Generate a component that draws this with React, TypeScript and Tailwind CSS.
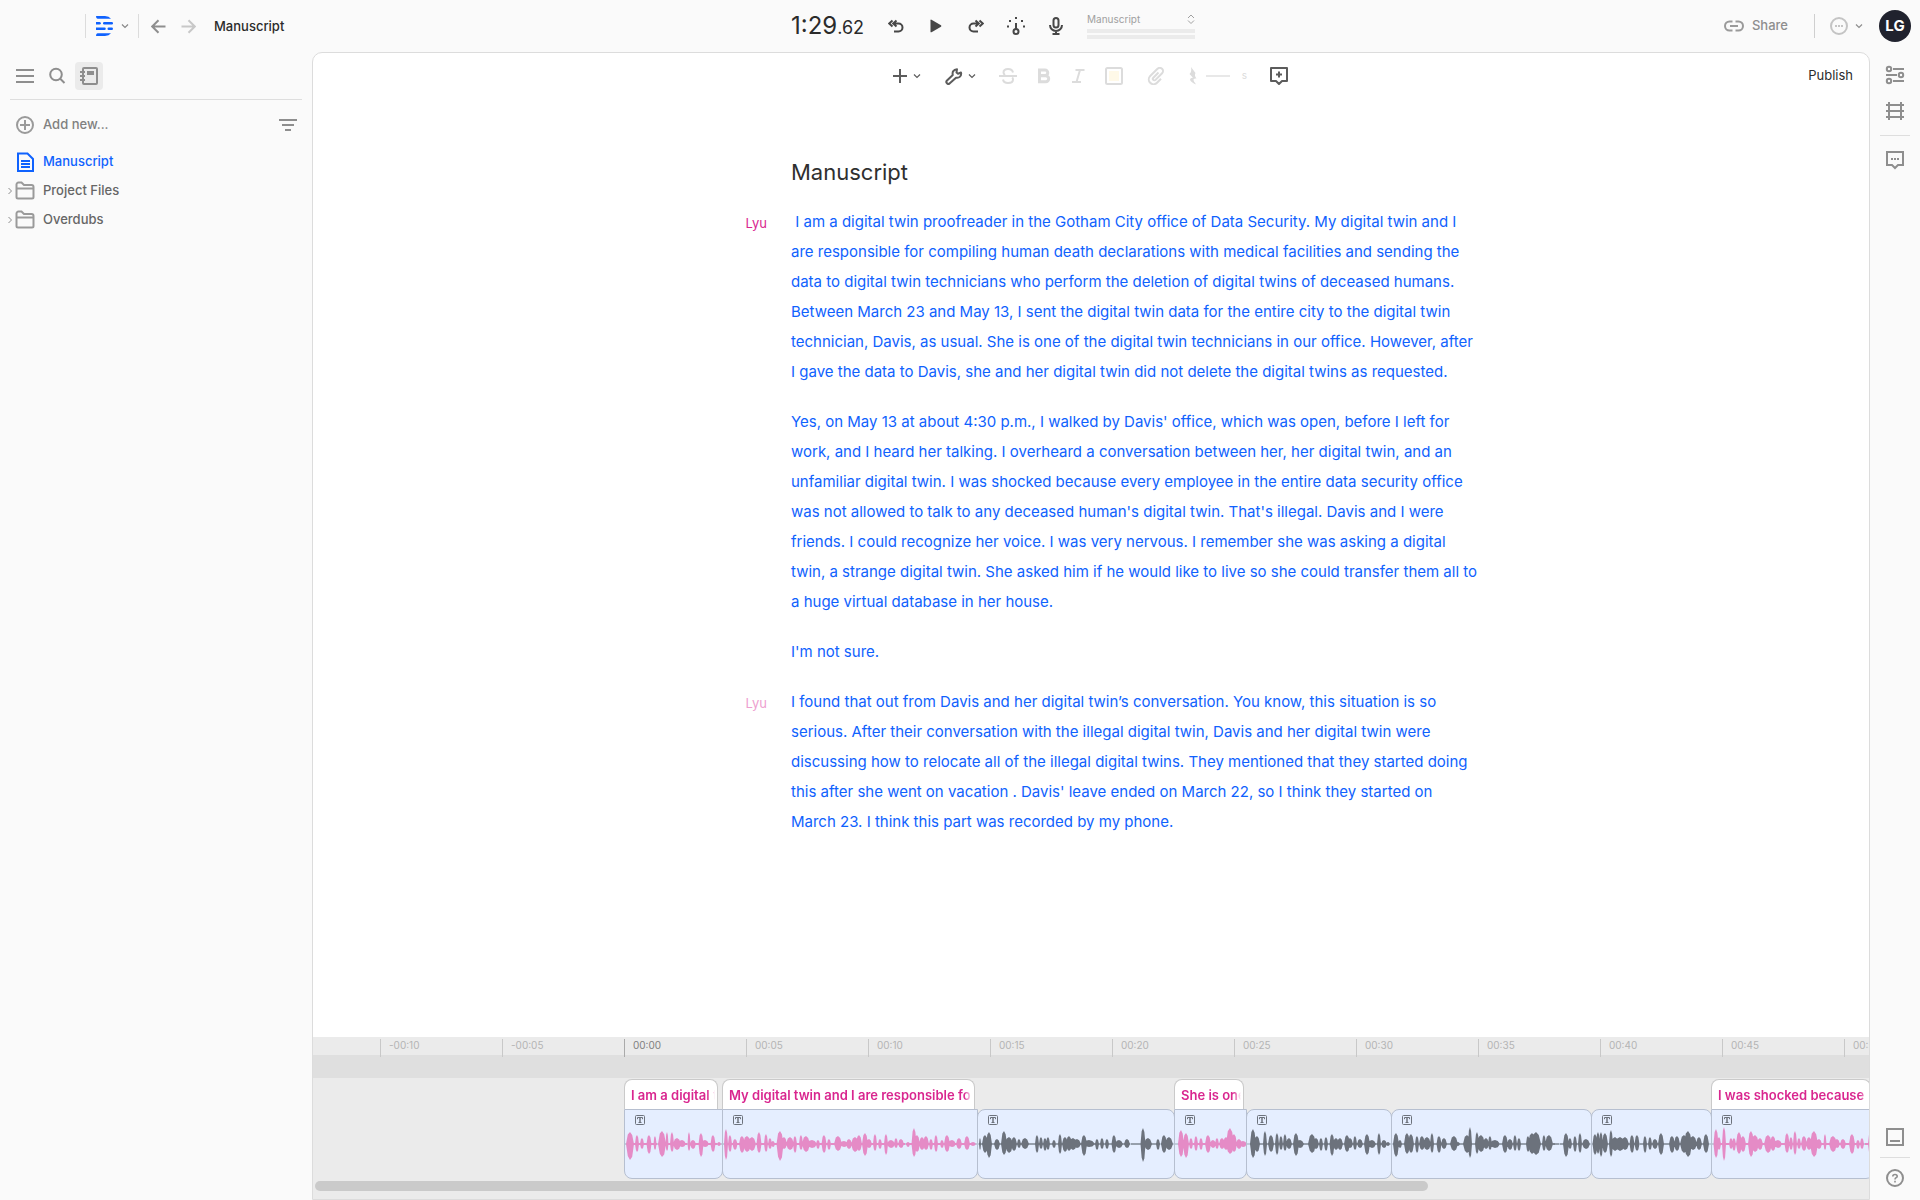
import type { ReactNode } from "react";

// [x, half width, height above the line, height below the line]
type Peak = [number, number, number, number];

type Clip = {
  width: number;
  label?: string;
  labelWidth?: number;
  peaks: Peak[];
};

const CLIPS: Clip[] = [
  {
    width: 98,
    label: "I am a digital t",
    labelWidth: 94,
    peaks: [
      [5, 4, 12, 16], [12, 2, 9, 8], [17, 2, 6, 5], [24, 2.5, 9, 10], [30, 1.5, 8, 6], [37, 4, 13, 13],
      [42, 1.5, 12, 7], [47, 2, 12, 8], [52, 4, 6, 6], [57, 4, 4, 3], [64, 1.5, 12, 7], [68, 3, 4, 5],
      [76, 2.5, 11, 13], [80, 4, 4, 3], [88, 2.5, 9, 8], [94, 2, 2, 2],
    ],
  },
  {
    width: 255,
    label: "My digital twin and I are responsible fo",
    labelWidth: 253,
    peaks: [
      [3, 2, 15, 16], [7, 2, 9, 8], [12, 2.5, 5, 6], [19, 3, 8, 9], [24, 4, 8, 8], [29, 4, 7, 7],
      [36, 2.5, 12, 9], [43, 2, 10, 8], [47, 2, 6, 5], [50, 2, 3, 3], [57, 3.5, 13, 17], [61, 3, 7, 5],
      [67, 4, 7, 6], [72, 2, 8, 9], [78, 2, 9, 6], [83, 4, 8, 8], [89, 5, 4, 4], [95, 2, 4, 5],
      [101, 2.5, 9, 9], [106, 2, 5, 6], [115, 4, 8, 7], [121, 4, 3, 3], [126, 3, 5, 5], [132, 4, 7, 8],
      [136, 3, 9, 7], [142, 3, 11, 12], [146, 3, 5, 4], [152, 2, 10, 7], [157, 2, 5, 5], [163, 2, 10, 11],
      [168, 4, 4, 4], [173, 2, 6, 4], [178, 3, 5, 4], [185, 2, 2, 3], [191, 2.5, 16, 13], [194, 3, 9, 8],
      [199, 3, 7, 6], [203, 3, 8, 6], [208, 2, 5, 6], [213, 2, 9, 8], [219, 2, 4, 4], [224, 3, 9, 8],
      [229, 4, 4, 3], [236, 3, 6, 5], [244, 3, 8, 6], [250, 3, 2, 2],
    ],
  },
  {
    width: 197,
    peaks: [
      [2, 1, 6, 6], [7, 3, 9, 9], [11, 3, 12, 14], [19, 3, 5, 6], [26, 3, 13, 11], [31, 4, 7, 9],
      [36, 3, 7, 7], [41, 2, 5, 4], [47, 4, 6, 5], [59, 2, 9, 9], [63, 2, 7, 5], [67, 2, 6, 7],
      [70, 2, 7, 6], [76, 2, 4, 4], [82, 2, 10, 10], [87, 3, 7, 8], [91, 3, 8, 7], [95, 4, 6, 6],
      [99, 4, 5, 4], [106, 3, 9, 12], [111, 6, 4, 3], [119, 2, 5, 6], [124, 2, 6, 5], [129, 2, 5, 5],
      [136, 2.5, 9, 9], [141, 4, 4, 4], [149, 3, 5, 4], [165, 2.5, 16, 18], [170, 4, 6, 6], [180, 2, 5, 6],
      [186, 3, 9, 9], [191, 4, 7, 6],
    ],
  },
  {
    width: 72,
    label: "She is one",
    labelWidth: 70,
    peaks: [
      [6, 3, 14, 13], [11, 3, 11, 14], [16, 2, 6, 5], [21, 2, 8, 7], [26, 2, 6, 6], [33, 3, 9, 9],
      [38, 3, 4, 4], [42, 2, 6, 5], [47, 3, 6, 5], [51, 3, 7, 6], [55, 4, 16, 10], [59, 3, 10, 8],
      [64, 3, 5, 5], [68, 4, 3, 3],
    ],
  },
  {
    width: 145,
    peaks: [
      [6, 3, 15, 14], [10, 3, 8, 8], [18, 2, 13, 12], [24, 3, 9, 8], [30, 2, 11, 11], [34, 2, 8, 6],
      [38, 2, 10, 7], [42, 3, 6, 5], [49, 3, 11, 12], [53, 4, 4, 4], [65, 4, 10, 9], [69, 3, 6, 5],
      [74, 2, 6, 7], [79, 2, 7, 7], [85, 2.5, 10, 12], [89, 3, 6, 6], [93, 3, 6, 6], [100, 3, 9, 8],
      [103, 3, 6, 4], [108, 2, 8, 6], [113, 3, 5, 4], [120, 3, 10, 11], [125, 4, 4, 4], [132, 2, 11, 11],
      [137, 3, 4, 4], [141, 2, 2, 2],
    ],
  },
  {
    width: 200,
    peaks: [
      [4, 3, 11, 13], [8, 2, 4, 4], [15, 3, 11, 10], [19, 3, 10, 9], [25, 2, 8, 9], [30, 3, 8, 6],
      [35, 4, 7, 6], [40, 2, 11, 9], [47, 2.5, 8, 9], [52, 3, 6, 5], [62, 4, 8, 7], [66, 2, 2, 2],
      [75, 4, 9, 9], [78, 2, 17, 14], [85, 2, 12, 10], [89, 4, 9, 8], [94, 3, 6, 5], [98, 2, 8, 6],
      [103, 5, 4, 4], [113, 3, 9, 9], [118, 3, 5, 6], [123, 2, 9, 7], [127, 2, 6, 7], [136, 2, 8, 8],
      [140, 4, 11, 10], [144, 5, 12, 11], [152, 2, 9, 7], [157, 4, 9, 7], [162, 1, 1, 1], [174, 3, 11, 13],
      [178, 2, 6, 5], [183, 2, 8, 8], [188, 2, 11, 9], [194, 4, 5, 5],
    ],
  },
  {
    width: 120,
    peaks: [
      [3, 2.5, 10, 11], [6, 2, 12, 10], [9, 2, 12, 13], [13, 3, 11, 9], [19, 2, 14, 13], [23, 4, 7, 7],
      [28, 5, 7, 7], [33, 4, 7, 6], [40, 2.5, 9, 9], [45, 2.5, 9, 7], [53, 2, 8, 9], [58, 2, 7, 6],
      [63, 3, 5, 5], [69, 3, 11, 11], [80, 3, 8, 9], [85, 3, 8, 7], [92, 4, 9, 9], [96, 4, 13, 13],
      [101, 4, 8, 6], [107, 3, 7, 6], [114, 3, 10, 9],
    ],
  },
  {
    width: 162,
    label: "I was shocked because e",
    labelWidth: 160,
    peaks: [
      [4, 2.5, 15, 14], [7, 2, 7, 6], [12, 2, 17, 17], [19, 2, 6, 5], [22, 2, 6, 7], [27, 3, 12, 10],
      [31, 3, 8, 8], [39, 3, 13, 13], [43, 4, 9, 8], [48, 3, 6, 6], [56, 4, 9, 9], [61, 3, 8, 7],
      [66, 4, 4, 4], [75, 2.5, 11, 9], [79, 2, 7, 6], [83, 2, 13, 11], [87, 2, 6, 5], [92, 3, 8, 7],
      [97, 3, 7, 6], [102, 4, 13, 13], [107, 3, 5, 5], [113, 1.5, 10, 6], [121, 4, 8, 8], [125, 3, 5, 4],
      [131, 3, 5, 5], [140, 3, 10, 10], [146, 2, 4, 5], [150, 2, 6, 5], [158, 2, 11, 10],
    ],
  },
];

const TICKS = [
  "-00:10", "-00:05", "00:00", "00:05", "00:10", "00:15", "00:20",
  "00:25", "00:30", "00:35", "00:40", "00:45", "00:50",
];

const PARAGRAPHS: { speaker?: string; faded?: boolean; lines: string[] }[] = [
  {
    speaker: "Lyu",
    lines: [
      " I am a digital twin proofreader in the Gotham City office of Data Security. My digital twin and I",
      "are responsible for compiling human death declarations with medical facilities and sending the",
      "data to digital twin technicians who perform the deletion of digital twins of deceased humans.",
      "Between March 23 and May 13, I sent the digital twin data for the entire city to the digital twin",
      "technician, Davis, as usual. She is one of the digital twin technicians in our office. However, after",
      "I gave the data to Davis, she and her digital twin did not delete the digital twins as requested.",
    ],
  },
  {
    lines: [
      "Yes, on May 13 at about 4:30 p.m., I walked by Davis' office, which was open, before I left for",
      "work, and I heard her talking. I overheard a conversation between her, her digital twin, and an",
      "unfamiliar digital twin. I was shocked because every employee in the entire data security office",
      "was not allowed to talk to any deceased human's digital twin. That's illegal. Davis and I were",
      "friends. I could recognize her voice. I was very nervous. I remember she was asking a digital",
      "twin, a strange digital twin. She asked him if he would like to live so she could transfer them all to",
      "a huge virtual database in her house.",
    ],
  },
  { lines: ["I'm not sure."] },
  {
    speaker: "Lyu",
    faded: true,
    lines: [
      "I found that out from Davis and her digital twin’s conversation. You know, this situation is so",
      "serious. After their conversation with the illegal digital twin, Davis and her digital twin were",
      "discussing how to relocate all of the illegal digital twins. They mentioned that they started doing",
      "this after she went on vacation . Davis' leave ended on March 22, so I think they started on",
      "March 23. I think this part was recorded by my phone.",
    ],
  },
];

function Icon({ size = 20, className = "", sw = 2, children }: { size?: number; className?: string; sw?: number; children: ReactNode }) {
  return (
    <svg
      width={size}
      height={size}
      viewBox={`0 0 ${size} ${size}`}
      fill="none"
      stroke="currentColor"
      strokeWidth={sw}
      className={`shrink-0 ${className}`}
      aria-hidden="true"
    >
      {children}
    </svg>
  );
}

function Chevron({ className = "" }: { className?: string }) {
  return (
    <Icon size={8} sw={1.2} className={className}>
      <path d="M1 2.5l3 3 3-3" />
    </Icon>
  );
}

function Divider({ className = "bg-[#ececec]" }: { className?: string }) {
  return <div className={`h-6 w-px shrink-0 ${className}`} />;
}

function Header() {
  return (
    <header className="grid h-13 shrink-0 grid-cols-[312px_1fr_50px] items-center">
      <div className="flex items-center pl-[85px]">
        <Divider className="bg-[#dcdcdc]" />
        <button aria-label="Menu" className="ml-2.5 flex items-center gap-2 text-[#888]">
          <svg width="17" height="20" viewBox="0 0 17 20" fill="#0f62fe" aria-hidden="true">
            <path d="M0 0h9q4 .3 6 2.8H1.5Q0 2.600 0 0z" />
            <path d="M0 6h3.500a1.200 1.200 0 0 1 0 2.500H0z" />
            <rect x="7" y="6" width="10" height="2.500" rx="1.200" />
            <path d="M0 11.500h8.500a1.200 1.200 0 0 1 0 2.500H0z" />
            <rect x="11.500" y="11.500" width="5.500" height="2.500" rx="1.200" />
            <path d="M0 20h9q4-.3 6-2.800H1.500Q0 17.400 0 20z" />
          </svg>
          <Chevron />
        </button>
        <Divider className="ml-[9px] bg-[#dcdcdc]" />
        <button aria-label="Back" className="ml-3 text-[#8e8e8e]">
          <Icon size={15}><path d="M14.500 7.500H1.500M7.500 1.200L1.200 7.500l6.300 6.300" /></Icon>
        </button>
        <button aria-label="Forward" className="ml-[15px] text-[#c8c8c8]">
          <Icon size={15}><path d="M.5 7.500h13M7.500 1.200l6.300 6.300-6.300 6.300" /></Icon>
        </button>
        <h1 className="ml-[18px] pt-px text-[13px] font-medium text-[#2b2b2b]">Manuscript</h1>
      </div>

      <div className="grid grid-cols-[1fr_800px_1fr] items-center">
        <div className="col-start-2 flex items-center pl-[100px] text-[#474747]">
          <div className="w-[97px] pt-px text-2xl leading-6 whitespace-nowrap text-[#2b2b2b]">
            1:29<span className="text-lg leading-6">.62</span>
          </div>
          <button aria-label="Skip back">
            <Icon size={16}>
              <path d="M4.500 2.500L1.200 5.500l3.300 3M8.500 2.500l-3.300 3 3.300 3M5.500 5.500h5a3.800 3.800 0 0 1 0 8H6" />
            </Icon>
          </button>
          <button aria-label="Play" className="ml-[26px]">
            <svg width="12" height="14" viewBox="0 0 12 14" fill="currentColor" aria-hidden="true">
              <path d="M.5 1.200Q.5.300 1.500.800L11 6.300q.8.700 0 1.400L1.500 13.200q-1 .5-1-.5z" />
            </svg>
          </button>
          <button aria-label="Skip forward" className="ml-[26px]">
            <Icon size={16}>
              <path d="M11.500 2.500l3.300 3-3.300 3M7.500 2.500l3.300 3-3.300 3M10.500 5.500h-5a3.800 3.800 0 0 0 0 8H10" />
            </Icon>
          </button>
          <button aria-label="Playback speed" className="ml-[22px]">
            <Icon size={20}>
              <path d="M10 7v6" />
              <circle cx="10" cy="15.500" r="2.500" />
              <path d="M1 10.500h2M17 10.500h2M3 5h2M15 5h2M9 2h2" />
            </Icon>
          </button>
          <button aria-label="Record" className="ml-[21px]">
            <Icon size={18}>
              <rect x="6.500" y="1" width="5" height="9.500" rx="2.500" />
              <path d="M3 8a6 6 0 0 0 12 0M9 14v3M5.500 17h7" />
            </Icon>
          </button>
          <div className="ml-[22px] w-[108px]">
            <div className="flex h-3 items-center justify-between text-[#a0a0a0]">
              <select aria-label="Track" className="w-24 appearance-none bg-transparent text-[10px] leading-3">
                <option>Manuscript</option>
              </select>
              <Icon size={8} sw={1} className="h-[10px]">
                <path d="M1 3l3-3 3 3M1 5.500l3 3 3-3" />
              </Icon>
            </div>
            <div className="mt-1 h-1 bg-[#ebebeb]" />
            <div className="mt-[2px] h-1 bg-[#ebebeb]" />
          </div>
        </div>
        <div className="flex items-center justify-end pr-[7px] text-[#8e8e8e]">
          <button className="flex items-center gap-2 text-[13px] font-medium">
            <Icon size={20} className="text-[#9a9a9a]">
              <path d="M8.500 5.500H5.500a4.500 4.500 0 0 0 0 9h3M11.500 5.500h3a4.500 4.500 0 0 1 0 9h-3M6 10h8" />
            </Icon>
            Share
          </button>
          <Divider className="ml-[26px] bg-[#cfcfcf]" />
          <button aria-label="Status" className="ml-[15px] flex items-center gap-[7px]">
            <Icon size={18} className="text-[#c4c4c4]">
              <circle cx="9" cy="9" r="8" />
              <path d="M5 9h2M8 9h2M11 9h2" />
            </Icon>
            <Chevron />
          </button>
        </div>
      </div>

      <button className="mx-auto flex size-8 items-center justify-center rounded-full bg-[#20222e] text-[15px] font-bold text-white">
        LG
      </button>
    </header>
  );
}

function FolderRow({ name }: { name: string }) {
  return (
    <li>
      <button className="flex h-[29px] items-center text-[13px] font-medium text-[#666]">
        <Icon size={8} sw={1} className="text-[#8e8e8e]"><path d="M1.500 1l3 3-3 3" /></Icon>
        <Icon size={20} className="text-[#9a9a9a]">
          <path d="M1.500 16V3.500a2 2 0 0 1 2-2h3L9 4h7.500a2 2 0 0 1 2 2v10a1.500 1.500 0 0 1-1.500 1.500H3A1.500 1.500 0 0 1 1.500 16zM1.500 7.500h17" />
        </Icon>
        <span className="ml-2">{name}</span>
      </button>
    </li>
  );
}

function Sidebar() {
  return (
    <aside className="w-[312px] shrink-0 pr-2.5">
      <div className="ml-2.5 flex h-12 items-center border-b border-[#dedede] pl-[6px] text-[#8e8e8e]">
        <button aria-label="Outline">
          <Icon size={18}><path d="M0 3h18M0 9h18M0 15h18" /></Icon>
        </button>
        <button aria-label="Search" className="ml-[14px]">
          <Icon size={18}>
            <circle cx="8" cy="7.500" r="5.800" />
            <path d="M12 11.500l4.500 4.500" />
          </Icon>
        </button>
        <button aria-label="Project" className="ml-[9px] flex size-7 items-center justify-center rounded bg-[#ebebeb]">
          <Icon size={20}>
            <rect x="4" y="2" width="14" height="16" rx="1" />
            <path d="M1 6h5M1 10h5M1 14h5" />
            <path d="M8 7h7" strokeWidth="4" />
          </Icon>
        </button>
      </div>
      <div className="flex h-[47px] items-center justify-between pt-[2px] pr-[5px] pl-4">
        <button className="flex items-center text-[13px] font-medium text-[#808080]">
          <Icon size={18} className="text-[#9a9a9a]">
            <circle cx="9" cy="9" r="8" />
            <path d="M9 4v10M4 9h10" />
          </Icon>
          <span className="ml-[9px]">Add new...</span>
        </button>
        <button aria-label="Filter" className="text-[#8e8e8e]">
          <Icon size={18}><path d="M0 4h18M3 9h12M6 14h6" /></Icon>
        </button>
      </div>
      <ul className="pl-[7px]">
        <li>
          <button className="flex h-[29px] items-center pl-2 text-[13px] font-medium text-[#0f62fe]">
            <Icon size={20}>
              <path d="M3 1.500h9.500L18 7v12H3z" />
              <path d="M6 9h9M6 12h9M6 15h9" />
            </Icon>
            <span className="ml-2">Manuscript</span>
          </button>
        </li>
        <FolderRow name="Project Files" />
        <FolderRow name="Overdubs" />
      </ul>
    </aside>
  );
}

function Toolbar() {
  return (
    <div className="grid h-[45px] shrink-0 grid-cols-[1fr_auto_1fr] items-center">
      <div className="col-start-2 flex items-center text-[#dcdcdc]">
        <button aria-label="Insert" className="flex items-center gap-[6px] text-[#5c5c5c]">
          <Icon size={14}><path d="M7 0v14M0 7h14" /></Icon>
          <Chevron />
        </button>
        <Divider className="ml-3" />
        <button aria-label="Tools" className="ml-[11px] flex items-center gap-[5px] text-[#5c5c5c]">
          <Icon size={18}>
            <path
              strokeLinejoin="round"
              d="M2 13.500L7.800 8C7 5 8.500 2.500 12 2.200L11.500 5.500l1.500 1.200L16 5.500c.8 3.500-1.800 5.800-5 5.200L4.800 16.300a1.800 1.800 0 0 1-2.800-2.800z"
            />
          </Icon>
          <Chevron />
        </button>
        <Divider className="ml-[11px]" />
        <button aria-label="Strikethrough" disabled className="ml-[11px]">
          <Icon size={18}>
            <path d="M14 5.500C13.500 3 11.500 2 9 2 6.500 2 4.500 3.200 4.500 5.500c0 1 .5 1.700 1.500 2.500M4 12.500C4.500 15 6.500 16 9 16c2.700 0 5-1 5-3.500 0-.8-.3-1.500-.8-2M0 9h18" />
          </Icon>
        </button>
        <button aria-label="Bold" disabled className="ml-[18px]">
          <Icon size={18} sw={3}>
            <path d="M4.500 3h5.500a2.700 2.700 0 0 1 0 5.500h-5.500zM4.500 8.700h6.200a3 3 0 0 1 0 6H4.500z" />
          </Icon>
        </button>
        <button aria-label="Italic" disabled className="ml-4">
          <Icon size={18}><path d="M6.500 3h9M3 15h9M11 3L7.500 15" /></Icon>
        </button>
        <button aria-label="Highlight" disabled className="ml-[18px]">
          <Icon size={18}>
            <rect x="1" y="1" width="16" height="16" rx="1.500" />
            <rect x="4" y="4" width="10" height="10" fill="#fff9e8" stroke="none" />
          </Icon>
        </button>
        <Divider className="ml-[11px]" />
        <button aria-label="Link" disabled className="ml-3">
          <Icon size={18}>
            <path d="M11.500 5.500L6.300 10.700a1.500 1.500 0 0 0 2.200 2.200l6.600-6.600a3.200 3.200 0 0 0-4.600-4.500L3.200 9a4.800 4.800 0 0 0 6.800 6.800l4-4" />
          </Icon>
        </button>
        <Divider className="ml-2.5" />
        <label className="flex items-center">
          <svg width="8" height="18" viewBox="0 0 8 18" fill="currentColor" className="ml-[13px]" aria-hidden="true">
            <path d="M2 0l4.500 6q-1.500 2.500 1 5.500Q4 11 4.500 13q.3 1.800 2 3.500v1Q1 14.500 1 12.500q.3-2 3-1.800L.5 7Q3 4.500 2 0z" />
          </svg>
          <input
            aria-label="Gap length"
            disabled
            className="ml-[9px] h-[2px] w-6 bg-[#e8e8e8]"
          />
          <span className="ml-3 text-[10px]">s</span>
        </label>
        <Divider className="ml-[11px]" />
        <button aria-label="Comment" className="ml-2.5 text-[#5c5c5c]">
          <Icon size={20}>
            <path strokeLinejoin="round" d="M2 2h16v13h-5l-3 3-3-3H2z" />
            <path d="M10 5.500v6M7 8.500h6" />
          </Icon>
        </button>
      </div>
      <button className="justify-self-end pr-4 text-[13px] text-[#2b2b2b]">Publish</button>
    </div>
  );
}

function Document() {
  return (
    <article className="min-h-0 flex-1 overflow-hidden">
      <div className="mx-auto w-[800px] pt-[58px] pl-[100px]">
        <h2 className="text-[22px] leading-8 text-[#2f2f2f]">Manuscript</h2>
        <div className="mt-[19px] flex flex-col gap-5">
          {PARAGRAPHS.map((p, i) => (
            <div key={i} className="relative">
              {p.speaker && (
                <span
                  className={`absolute right-full mr-6 text-[13px] leading-8 ${p.faded ? "text-[#ee9fd0]" : "text-[#d9268f]"}`}
                >
                  {p.speaker}
                </span>
              )}
              <p className="text-[15px] leading-[30px] whitespace-pre text-[#0f62fe]">{p.lines.join("\n")}</p>
            </div>
          ))}
        </div>
      </div>
    </article>
  );
}

function Waveform({ peaks, width, tinted }: { peaks: Peak[]; width: number; tinted: boolean }) {
  const d = peaks
    .map(([x, w, up, down]) => {
      const t = w * 0.55;
      return `M${x - w} 0L${x - t} ${-up * 0.8}L${x} ${-up}L${x + t} ${-up * 0.75}L${x + w} 0L${x + t} ${down * 0.8}L${x} ${down}L${x - t} ${down * 0.75}Z`;
    })
    .join("");
  return (
    <svg width={width} height="38" viewBox={`0 -19 ${width} 38`} aria-hidden="true">
      <path d={`M0 0H${width}`} stroke="#9aa9b8" />
      <path d={`M3 0H${width - 5}`} stroke={tinted ? "#e58bc6" : "#6c727c"} strokeWidth={tinted ? 2 : 1} strokeDasharray="14 1" />
      <path d={d} fill={tinted ? "#e58bc6" : "#6c727c"} />
    </svg>
  );
}

function TimelineClip({ clip }: { clip: Clip }) {
  return (
    <div className="shrink-0" style={{ width: clip.width }}>
      <div className="h-[30px]">
        {clip.label && (
          <div
            className="h-full rounded-t-lg border border-b-0 border-[#cacaca] bg-white pr-[2px] pl-[6px]"
            style={{ width: clip.labelWidth }}
          >
            <div className="overflow-hidden mask-r-from-[calc(100%-8px)] text-[13px] leading-[30px] font-semibold whitespace-nowrap text-[#d9268f]">
              {clip.label}
            </div>
          </div>
        )}
      </div>
      <div
        className={`-mr-px h-[70px] overflow-hidden rounded-lg border border-[#b6bfd0] bg-[#e5eeff] ${clip.label ? "rounded-t-none" : ""}`}
      >
        <Icon size={10} sw={1} className="mt-[5px] ml-2.5 text-[#6c727c]">
          <rect x=".5" y=".5" width="9" height="9" rx="1" />
          <path d="M2.500 4.200V2.500h5V4.200M3.500 7.500h3" />
          <path d="M5 2.500v5" strokeWidth="1.500" />
        </Icon>
        <Waveform peaks={clip.peaks} width={clip.width} tinted={!!clip.label} />
      </div>
    </div>
  );
}

function Timeline() {
  return (
    <section aria-label="Timeline" className="shrink-0 overflow-hidden bg-[#ebebeb] pb-2">
      <div className="flex h-[18px] pl-[67px] text-[10px] leading-3">
        {TICKS.map((t) => (
          <div
            key={t}
            className={`mt-[2px] h-[18px] w-[122px] shrink-0 border-l pl-2 ${t === "00:00" ? "border-[#aaa] text-[#808080]" : "border-[#c8c8c8] text-[#b4b4b4]"}`}
          >
            {t}
          </div>
        ))}
      </div>
      <div className="h-[23px] bg-[#dfdfdf]" />
      <div className="flex pt-px pl-[311px]">
        {CLIPS.map((clip, i) => (
          <TimelineClip key={i} clip={clip} />
        ))}
      </div>
      <div className="mt-[2px] ml-[2px] h-2.5 w-[71.5%] rounded-full bg-[#cacaca]" />
    </section>
  );
}

function RightRail() {
  return (
    <aside className="flex w-[50px] shrink-0 flex-col items-center pt-[13px] pb-3 text-[#8e8e8e]">
      <button aria-label="Properties">
        <Icon size={20}>
          <circle cx="4" cy="4" r="2.200" />
          <circle cx="16" cy="10" r="2.200" />
          <circle cx="4" cy="16" r="2.200" />
          <path d="M8 4h11M1 10h11M8 16h11" />
        </Icon>
      </button>
      <button aria-label="Frame" className="mt-4">
        <Icon size={20}><path d="M1 4h18M1 10h18M1 16h18M4 1v18M16 1v18" /></Icon>
      </button>
      <div className="mt-[14px] h-px w-[30px] bg-[#dedede]" />
      <button aria-label="Comments" className="mt-[14px]">
        <Icon size={20}>
          <path d="M2 2h16v13h-5l-3 3-3-3H2z" />
          <path d="M6 9h2M9 9h2M12 9h2" />
        </Icon>
      </button>
      <button aria-label="Toggle timeline" className="mt-auto">
        <Icon size={20}>
          <rect x="2" y="2" width="16" height="16" />
          <path d="M5 14h10" />
        </Icon>
      </button>
      <div className="mt-2.5 h-px w-[30px] bg-[#dedede]" />
      <button aria-label="Help" className="mt-2.5">
        <Icon size={20}>
          <circle cx="10" cy="10" r="8" />
          <path d="M7.800 8.500C7.800 7 8.800 6.500 10 6.500s2.200.7 2.200 1.900c0 1.300-2.200 1.300-2.200 3M10 12.800v1.600" strokeWidth="1.600" />
        </Icon>
      </button>
    </aside>
  );
}

export default function App() {
  return (
    <div className="flex h-screen flex-col overflow-hidden bg-[#fafafa] font-[Inter,'Liberation_Sans',sans-serif]">
      <Header />
      <div className="flex min-h-0 flex-1">
        <Sidebar />
        <main className="flex min-w-0 flex-1 flex-col overflow-hidden rounded-t-[10px] border border-[#dcdcdc] bg-white">
          <Toolbar />
          <Document />
          <Timeline />
        </main>
        <RightRail />
      </div>
    </div>
  );
}
